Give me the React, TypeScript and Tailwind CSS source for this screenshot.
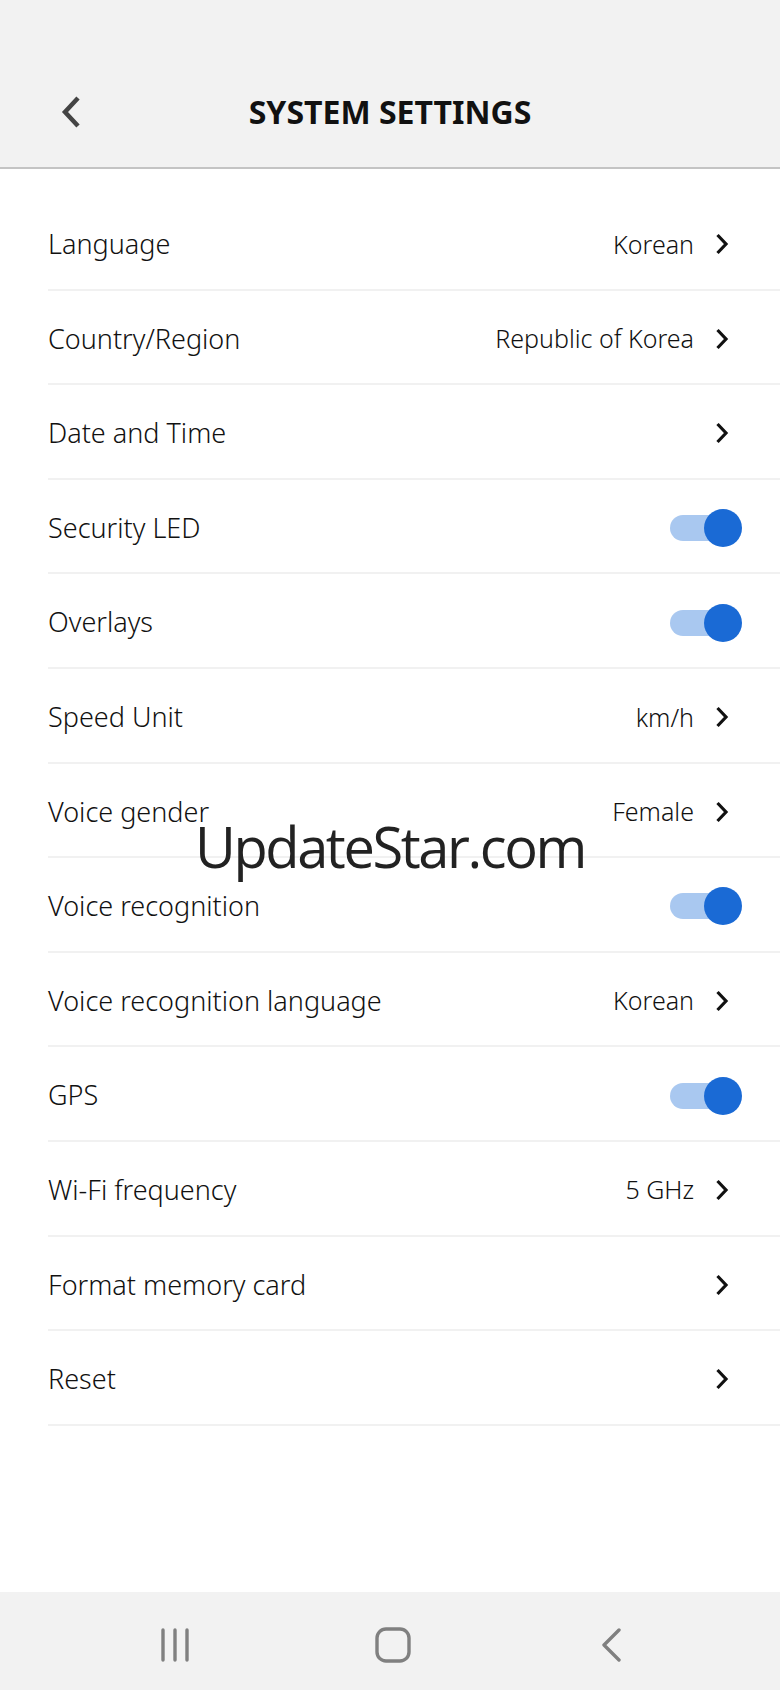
import React from 'react';

type Row =
  | { label: string; kind: 'link'; value?: string }
  | { label: string; kind: 'toggle' };

const rows: Row[] = [
  { label: 'Language', kind: 'link', value: 'Korean' },
  { label: 'Country/Region', kind: 'link', value: 'Republic of Korea' },
  { label: 'Date and Time', kind: 'link' },
  { label: 'Security LED', kind: 'toggle' },
  { label: 'Overlays', kind: 'toggle' },
  { label: 'Speed Unit', kind: 'link', value: 'km/h' },
  { label: 'Voice gender', kind: 'link', value: 'Female' },
  { label: 'Voice recognition', kind: 'toggle' },
  { label: 'Voice recognition language', kind: 'link', value: 'Korean' },
  { label: 'GPS', kind: 'toggle' },
  { label: 'Wi-Fi frequency', kind: 'link', value: '5 GHz' },
  { label: 'Format memory card', kind: 'link' },
  { label: 'Reset', kind: 'link' },
];

const Chevron: React.FC = () => (
  <svg width="16" height="24" viewBox="0 0 16 24" className="block">
    <path d="M3.5 3 L12 12 L3.5 21" fill="none" stroke="#111" strokeWidth="3.2" strokeLinejoin="miter" />
  </svg>
);

const Toggle: React.FC = () => (
  <div className="relative w-[72px] h-[38px] mr-[38px]">
    <div className="absolute left-0 top-[6px] w-[60px] h-[26px] rounded-full bg-[#a9c8f0]" />
    <div className="absolute right-0 top-0 w-[38px] h-[38px] rounded-full bg-[#1a6ad5]" />
  </div>
);

const SettingRow: React.FC<{ row: Row }> = ({ row }) => (
  <div className="ml-[48px] h-[94.6px] pt-[4px] flex items-center border-b-2 border-[#f1f1f1]">
    <span className="flex-1 text-[27px] font-light text-[#111]">{row.label}</span>
    {row.kind === 'toggle' ? (
      <Toggle />
    ) : (
      <div className="flex items-center mr-[50px]">
        {row.value && <span className="text-[25px] font-light text-[#111] mr-[20px]">{row.value}</span>}
        <Chevron />
      </div>
    )}
  </div>
);

export default function App() {
  return (
    <div
      className="relative w-[780px] h-[1690px] flex flex-col bg-white overflow-hidden"
      style={{ fontFamily: '"Noto Sans", Roboto, sans-serif' }}
    >
      {/* Header */}
      <div className="h-[169px] shrink-0 bg-[#f2f2f2] border-b-2 border-[#c4c4c4] flex flex-col justify-end">
        <div className="relative h-[56px] mb-[27px] flex items-center justify-center">
          <div className="absolute left-[58px] top-[12px]">
            <svg width="28" height="32" viewBox="0 0 28 32">
              <path d="M20 2 L7 16 L20 30" fill="none" stroke="#444" strokeWidth="4.5" />
            </svg>
          </div>
          <h1 className="text-[32px] font-bold text-[#111]">SYSTEM SETTINGS</h1>
        </div>
      </div>

      {/* List */}
      <div className="flex-1 pt-[27px]">
        {rows.map((r) => (
          <SettingRow key={r.label} row={r} />
        ))}
      </div>

      {/* Nav bar */}
      <div className="h-[98px] shrink-0 bg-[#f2f2f2] pt-[8px] pl-[5px] flex items-center justify-center">
        <div className="w-[218px] flex justify-center">
          <svg width="30" height="34" viewBox="0 0 30 34">
            <path d="M3 2 V32 M15 2 V32 M27 2 V32" stroke="#808080" strokeWidth="3.4" strokeLinecap="round" />
          </svg>
        </div>
        <div className="w-[218px] flex justify-center">
          <svg width="36" height="36" viewBox="0 0 36 36">
            <rect x="2" y="2" width="32" height="32" rx="9" fill="none" stroke="#808080" strokeWidth="3.4" />
          </svg>
        </div>
        <div className="w-[218px] flex justify-center">
          <svg width="24" height="34" viewBox="0 0 24 34">
            <path d="M20 2 L5 17 L20 32" fill="none" stroke="#808080" strokeWidth="3.4" strokeLinecap="round" strokeLinejoin="round" />
          </svg>
        </div>
      </div>

      {/* Watermark */}
      <div
        className="absolute left-[195px] top-[811px] text-[56px] leading-[70px] text-[#222] tracking-[-2.4px] whitespace-nowrap"
        style={{ fontFamily: '"Open Sans", sans-serif' }}
      >
        UpdateStar.com
      </div>
    </div>
  );
}
